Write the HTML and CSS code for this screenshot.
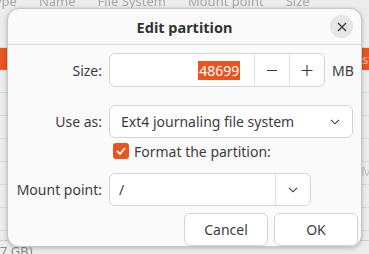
FILE: index.html
```html
<!DOCTYPE html>
<html>
<head>
<meta charset="utf-8">
<link rel="stylesheet" href="styles.css">
</head>
<body>
<div class="backdrop">
  <div class="bg-head"><span>Type</span><span>Name</span><span>File System</span><span>Mount point</span><span>Size</span></div>
  <div class="bg-row first"></div>
  <div class="bg-row sel"><span class="sel-text">Install</span></div>
  <div class="bg-row"></div>
  <div class="bg-row"></div>
  <div class="bg-row"></div>
  <div class="bg-row"></div>
  <div class="bg-row"><span class="bg-right">M</span></div>
  <div class="bg-row"></div>
  <div class="bg-row"></div>
  <div class="bg-row last"><span>7 GB)</span></div>
</div>

<div class="dialog">
  <div class="header">
    <div class="title">Edit partition</div>
    <div class="close">
      <svg width="10" height="10" viewBox="0 0 10 10"><path d="M1 1 L9 9 M9 1 L1 9" stroke="#3a3a3a" stroke-width="1.3" fill="none"/></svg>
    </div>
  </div>
  <div class="content">
    <div class="row row-size">
      <label class="lbl">Size:</label>
      <div class="spin">
        <div class="spin-text"><span class="selected">48699</span></div>
        <div class="spin-btn">
          <svg width="12" height="12" viewBox="0 0 12 12"><path d="M1 6.5 H11" stroke="#3a3a3a" stroke-width="1.1"/></svg>
        </div>
        <div class="spin-btn">
          <svg width="12" height="12" viewBox="0 0 12 12"><path d="M0.5 6.5 H11.5 M6 1 V12" stroke="#3a3a3a" stroke-width="1.1"/></svg>
        </div>
      </div>
      <span class="unit">MB</span>
    </div>
    <div class="row row-use">
      <label class="lbl">Use as:</label>
      <div class="combo">
        <span class="combo-text">Ext4 journaling file system</span>
        <svg class="chev" width="10" height="6" viewBox="0 0 10 6"><path d="M1 0.8 L5 4.8 L9 0.8" stroke="#3a3a3a" stroke-width="1.1" fill="none"/></svg>
      </div>
    </div>
    <div class="row row-check">
      <span class="lbl"></span>
      <div class="check">
        <span class="box"><svg width="12" height="10" viewBox="0 0 12 10"><path d="M2 5 L5 8 L10 2" stroke="#fff" stroke-width="1.8" fill="none"/></svg></span>
        <span class="check-text">Format the partition:</span>
      </div>
    </div>
    <div class="row row-mount">
      <label class="lbl">Mount point:</label>
      <div class="mcombo">
        <div class="mentry">/</div>
        <div class="mbtn">
          <svg width="10" height="6" viewBox="0 0 10 6"><path d="M1 0.8 L5 4.8 L9 0.8" stroke="#3a3a3a" stroke-width="1.1" fill="none"/></svg>
        </div>
      </div>
    </div>
    <div class="actions">
      <button class="btn">Cancel</button>
      <button class="btn">OK</button>
    </div>
  </div>
</div>
</body>
</html>
```

FILE: styles.css
```css
html, body {
  margin: 0;
  padding: 0;
}
body {
  width: 369px;
  height: 254px;
  overflow: hidden;
  background: #ececec;
  font-family: "Noto Sans", "DejaVu Sans", sans-serif;
  color: #3d3d3d;
  position: relative;
}
.backdrop {
  display: flex;
  flex-direction: column;
  filter: blur(0.7px);
}
.bg-head {
  height: 24px;
  display: flex;
  gap: 22px;
  font-size: 13px;
  color: #a8a8a8;
  line-height: 14px;
  margin-top: -6px;
  margin-left: -12px;
}
.bg-row {
  height: 22px;
  border-bottom: 1px solid #dcdcdc;
  font-size: 13px;
  color: #a0a0a0;
  display: flex;
  justify-content: space-between;
  flex-shrink: 0;
}
.bg-row.first {
  height: 29px;
}
.bg-row.sel {
  background: #e95420;
  color: #f3c2ae;
  justify-content: flex-end;
  height: 22px;
  border-bottom: none;
  line-height: 22px;
}
.sel-text {
  margin-right: -18px;
}
.bg-right {
  margin-left: auto;
  margin-right: -4px;
  color: #c4c4c4;
}
.bg-row.last {
  border-bottom: none;
  margin-top: 9px;
  padding-top: 3px;
  line-height: 14px;
  border-top: 1px solid #d0d0d0;
  color: #8a8a8a;
}

.dialog {
  position: absolute;
  left: 7px;
  top: 8px;
  width: 353px;
  height: 237px;
  background: #fafafa;
  border: 1px solid #c8c8c8;
  border-radius: 12px;
  box-shadow: 0 1px 4px rgba(0,0,0,0.25);
  display: flex;
  flex-direction: column;
  overflow: hidden;
}
.header {
  height: 35px;
  border-bottom: 1px solid #d8d8d8;
  display: flex;
  align-items: center;
  justify-content: center;
  position: relative;
  flex-shrink: 0;
}
.title {
  font-weight: bold;
  font-size: 14.5px;
  color: #333;
}
.close {
  position: absolute;
  right: 8px;
  top: 6px;
  width: 23px;
  height: 23px;
  border-radius: 50%;
  background: #e6e6e6;
  display: flex;
  align-items: center;
  justify-content: center;
}
.content {
  display: flex;
  flex-direction: column;
  padding-left: 7px;
  font-size: 14px;
}
.row {
  display: flex;
  align-items: center;
}
.lbl {
  width: 87px;
  text-align: right;
  padding-right: 7px;
  flex-shrink: 0;
  color: #3d3d3d;
}
.row-size {
  margin-top: 8px;
  height: 34px;
}
.spin {
  width: 214px;
  height: 32px;
  border: 1px solid #d4d4d4;
  border-radius: 6px;
  background: #fff;
  display: flex;
}
.spin-text {
  width: 146px;
  display: flex;
  align-items: center;
  justify-content: flex-end;
  box-sizing: border-box;
  padding-right: 14px;
  border-right: 1px solid #e0e0e0;
}
.selected {
  background: #e95420;
  color: #fff;
  padding: 0 1px;
  line-height: 19px;
}
.spin-btn {
  width: 34px;
  display: flex;
  align-items: center;
  justify-content: center;
}
.spin-btn + .spin-btn {
  border-left: 1px solid #e0e0e0;
}
.unit {
  margin-left: 7px;
}
.row-use {
  margin-top: 18px;
  height: 33px;
}
.combo {
  border: 1px solid #d4d4d4;
  border-radius: 6px;
  background: #fff;
  display: flex;
  align-items: center;
  justify-content: space-between;
  padding: 0 12px 0 11px;
  box-sizing: border-box;
  width: 244px;
  height: 33px;
}
.row-check {
  margin-top: 4px;
  height: 18px;
}
.check {
  display: flex;
  align-items: center;
  margin-left: 4px;
}
.box {
  width: 16px;
  height: 16px;
  border-radius: 3px;
  background: #e95420;
  display: flex;
  align-items: center;
  justify-content: center;
}
.check-text {
  margin-left: 5px;
}
.row-mount {
  margin-top: 13px;
  height: 33px;
}
.mcombo {
  width: 202px;
  height: 33px;
  box-sizing: border-box;
  border: 1px solid #d4d4d4;
  border-radius: 6px;
  background: #fff;
  display: flex;
}
.mentry {
  flex: 1;
  padding-left: 9px;
  display: flex;
  align-items: center;
  border-right: 1px solid #e0e0e0;
}
.mbtn {
  width: 34px;
  display: flex;
  align-items: center;
  justify-content: center;
}
.actions {
  display: flex;
  justify-content: flex-end;
  gap: 6px;
  margin-top: 7px;
  padding-right: 3px;
}
.btn {
  width: 84px;
  height: 33px;
  border: 1px solid #d4d4d4;
  border-radius: 6px;
  background: #fff;
  font-family: inherit;
  font-size: 14px;
  color: #3d3d3d;
  padding: 0;
}
```
